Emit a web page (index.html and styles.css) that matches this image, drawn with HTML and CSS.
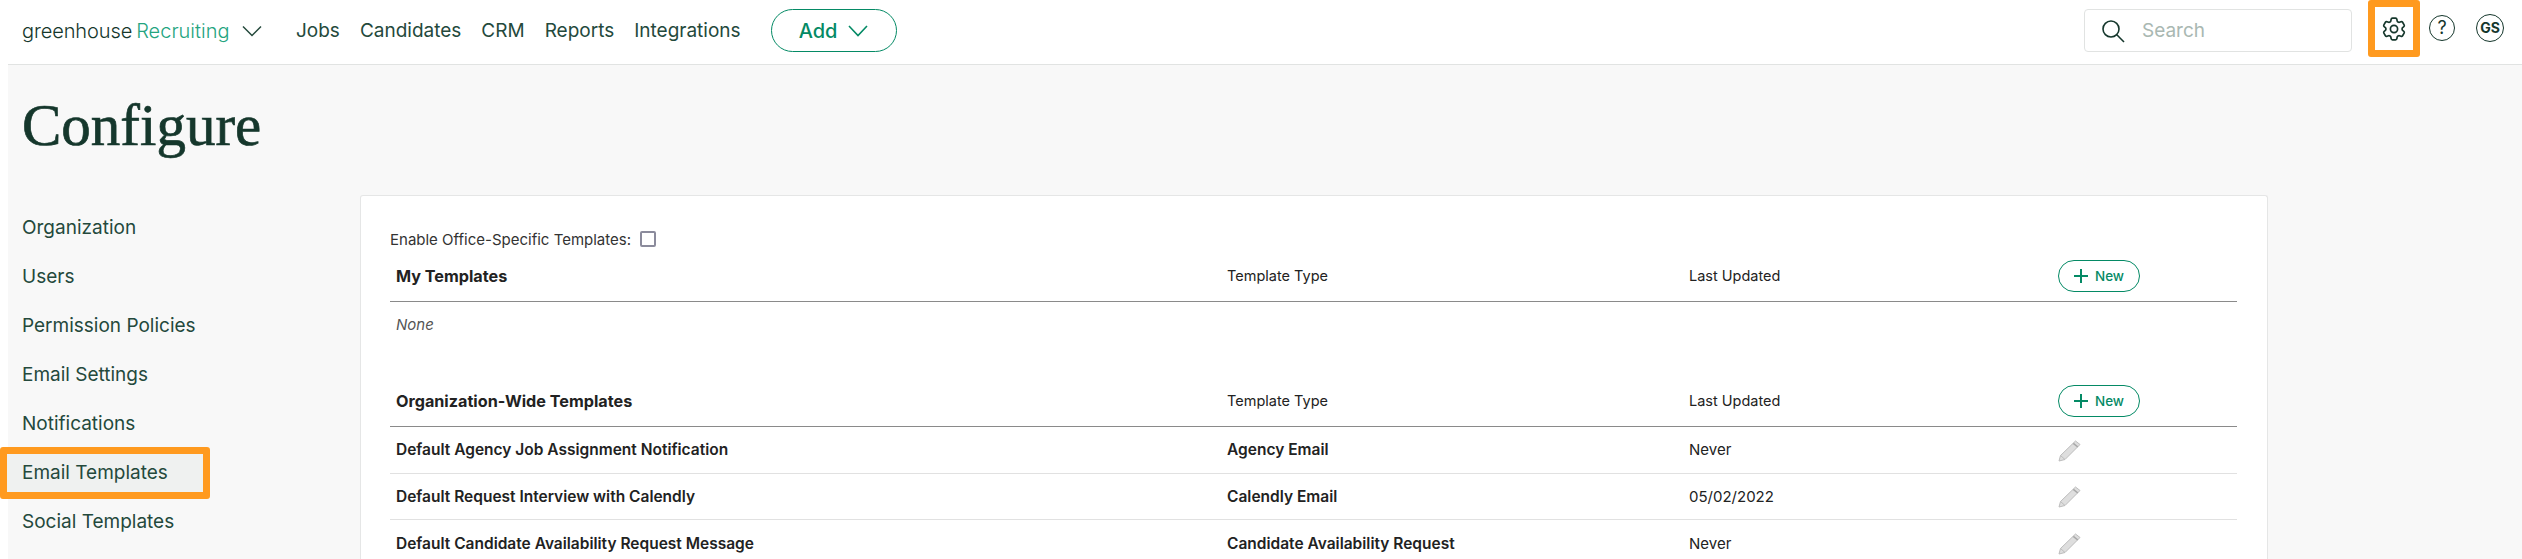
FILE: index.html
```html
<!DOCTYPE html>
<html>

<head>
	<meta charset="utf-8">
	<title>Configure</title>
	<link rel="stylesheet" href="styles.css">
</head>

<body>
	<header class="topbar">
		<div class="logo">
			<span class="logo-green">greenhouse</span>
			<span class="logo-product">Recruiting</span>
			<svg class="logo-chevron" width="20" height="12" viewBox="0 0 20 12"><path d="M1 1.500 10 10.500 19 1.500" fill="none" stroke="#24493c" stroke-width="1.500"/></svg>
		</div>
		<nav class="mainnav">
			<a>Jobs</a>
			<a>Candidates</a>
			<a>CRM</a>
			<a>Reports</a>
			<a>Integrations</a>
		</nav>
		<button class="add-btn">Add
			<svg width="20" height="12" viewBox="0 0 20 12"><path d="M1 1 10 10.500 19 1" fill="none" stroke="#048a65" stroke-width="1.600"/></svg>
		</button>
		<div class="top-right">
			<div class="searchbox">
				<svg width="24" height="24" viewBox="0 0 24 24"><circle cx="10" cy="10" r="8" fill="none" stroke="#15372c" stroke-width="1.600"/><path d="M15.800 15.800 23 23" stroke="#15372c" stroke-width="1.600"/></svg>
				<span>Search</span>
			</div>
			<div class="icon-gear">
				<svg width="24" height="24" viewBox="2 2 20 20" fill="none" stroke="#15372c" stroke-width="1.400" stroke-linejoin="round"><path d="M9.594 3.940c.09-.542.56-.94 1.110-.94h2.593c.55 0 1.020.398 1.110.94l.213 1.281c.063.374.313.686.645.87.074.04.147.083.22.127.324.196.72.257 1.075.124l1.217-.456a1.125 1.125 0 011.370.49l1.296 2.247a1.125 1.125 0 01-.26 1.431l-1.003.827c-.293.24-.438.613-.431.992a6.759 6.759 0 010 .255c-.007.378.138.75.43.99l1.005.828c.424.35.534.954.26 1.430l-1.298 2.247a1.125 1.125 0 01-1.369.491l-1.217-.456c-.355-.133-.75-.072-1.076.124a6.570 6.570 0 01-.22.128c-.331.183-.581.495-.644.869l-.213 1.280c-.09.543-.56.941-1.110.941h-2.594c-.55 0-1.020-.398-1.110-.94l-.213-1.281c-.062-.374-.312-.686-.644-.87a6.520 6.520 0 01-.22-.127c-.325-.196-.72-.257-1.076-.124l-1.217.456a1.125 1.125 0 01-1.369-.49l-1.297-2.247a1.125 1.125 0 01.26-1.431l1.004-.827c.292-.24.437-.613.43-.992a6.932 6.932 0 010-.255c.007-.378-.138-.75-.43-.99l-1.004-.828a1.125 1.125 0 01-.26-1.430l1.297-2.247a1.125 1.125 0 011.370-.491l1.216.456c.356.133.751.072 1.076-.124.072-.044.146-.087.22-.128.332-.183.582-.495.644-.869l.214-1.281z"/><circle cx="12" cy="12" r="3"/></svg>
			</div>
			<div class="icon-help">?</div>
			<div class="icon-user">GS</div>
		</div>
	</header>

	<main class="page">
		<h1 class="page-title">Configure</h1>
		<div class="columns">
			<ul class="sidenav">
				<li>Organization</li>
				<li>Users</li>
				<li>Permission Policies</li>
				<li>Email Settings</li>
				<li>Notifications</li>
				<li class="selected">Email Templates</li>
				<li>Social Templates</li>
			</ul>
			<section class="card">
				<div class="office-toggle">
					<span>Enable Office-Specific Templates:</span>
					<span class="checkbox"></span>
				</div>

				<div class="row head">
					<div class="col-name"><b>My Templates</b></div>
					<div class="col-type">Template Type</div>
					<div class="col-date">Last Updated</div>
					<div class="col-action"><button class="new-btn"><svg width="14" height="14" viewBox="0 0 14 14"><path d="M7 0v14M0 7h14" stroke="#048a65" stroke-width="2"/></svg>New</button></div>
				</div>
				<div class="none-row">None</div>

				<div class="row head">
					<div class="col-name"><b>Organization-Wide Templates</b></div>
					<div class="col-type">Template Type</div>
					<div class="col-date">Last Updated</div>
					<div class="col-action"><button class="new-btn"><svg width="14" height="14" viewBox="0 0 14 14"><path d="M7 0v14M0 7h14" stroke="#048a65" stroke-width="2"/></svg>New</button></div>
				</div>
				<div class="row item">
					<div class="col-name"><b>Default Agency Job Assignment Notification</b></div>
					<div class="col-type"><b>Agency Email</b></div>
					<div class="col-date">Never</div>
					<div class="col-action"><svg class="pencil" width="23" height="22" viewBox="0 0 23 22"><path d="M17.500 1 22 4.500 7 19.500 1 21 2.500 15.500z" fill="#dedede" stroke="#bdbdbd"/><path d="M2.500 15.500 7 19.500" fill="none" stroke="#bdbdbd"/><path d="M15.300 3.300 19.800 7" fill="none" stroke="#a8a8a8" stroke-width="1.500"/></svg></div>
				</div>
				<div class="row item">
					<div class="col-name"><b>Default Request Interview with Calendly</b></div>
					<div class="col-type"><b>Calendly Email</b></div>
					<div class="col-date">05/02/2022</div>
					<div class="col-action"><svg class="pencil" width="23" height="22" viewBox="0 0 23 22"><path d="M17.500 1 22 4.500 7 19.500 1 21 2.500 15.500z" fill="#dedede" stroke="#bdbdbd"/><path d="M2.500 15.500 7 19.500" fill="none" stroke="#bdbdbd"/><path d="M15.300 3.300 19.800 7" fill="none" stroke="#a8a8a8" stroke-width="1.500"/></svg></div>
				</div>
				<div class="row item">
					<div class="col-name"><b>Default Candidate Availability Request Message</b></div>
					<div class="col-type"><b>Candidate Availability Request</b></div>
					<div class="col-date">Never</div>
					<div class="col-action"><svg class="pencil" width="23" height="22" viewBox="0 0 23 22"><path d="M17.500 1 22 4.500 7 19.500 1 21 2.500 15.500z" fill="#dedede" stroke="#bdbdbd"/><path d="M2.500 15.500 7 19.500" fill="none" stroke="#bdbdbd"/><path d="M15.300 3.300 19.800 7" fill="none" stroke="#a8a8a8" stroke-width="1.500"/></svg></div>
				</div>
			</section>
		</div>
	</main>
</body>

</html>
```

FILE: styles.css
```css
html, body {
	margin: 0;
	height: 559px;
	overflow: hidden;
	background-color: #fff;
}

body {
	padding-left: 8px;
	font-family: "Inter", "Liberation Sans", sans-serif;
	color: #222;
}

/* top bar */
.topbar {
	display: flex;
	align-items: center;
	box-sizing: border-box;
	height: 65px;
	padding-bottom: 3px;
	border-bottom: 1px solid #e1e3e2;
	background-color: #fff;
}

.logo {
	display: flex;
	align-items: center;
	margin-left: 14px;
	font-size: 20px;
	font-weight: 300;
	width: 274px;
}

.logo-green {
	color: #15372c;
	letter-spacing: -0.1px;
}

.logo-product {
	margin-left: 4px;
	color: #24a47f;
}

.logo-chevron {
	margin-left: 13px;
}

.mainnav {
	display: flex;
	gap: 20px;
	font-size: 19px;
	color: #24493c;
}

.add-btn {
	display: flex;
	align-items: center;
	justify-content: center;
	gap: 11px;
	margin-left: 30px;
	width: 126px;
	height: 43px;
	border: 1px solid #048a65;
	border-radius: 22px;
	background-color: #fff;
	color: #048a65;
	font: 500 20px "Inter", "Liberation Sans", sans-serif;
}

.top-right {
	display: flex;
	align-items: center;
	margin-left: auto;
	padding-right: 18px;
}

.searchbox {
	display: flex;
	align-items: center;
	gap: 17px;
	box-sizing: border-box;
	width: 268px;
	height: 43px;
	padding-left: 16px;
	border: 1px solid #e1e3e2;
	border-radius: 4px;
	color: #a9b8b2;
	font-size: 19px;
}

.icon-gear {
	display: flex;
	align-items: center;
	justify-content: center;
	box-sizing: border-box;
	width: 52px;
	height: 57px;
	margin-left: 16px;
	margin-top: -4px;
	border: 7px solid #ff9a1f;
	border-radius: 3px;
}

.icon-help {
	box-sizing: border-box;
	width: 26px;
	height: 26px;
	margin-left: 9px;
	margin-top: -5px;
	border: 1.5px solid #15372c;
	border-radius: 50%;
	color: #15372c;
	font-size: 18px;
	line-height: 23px;
	text-align: center;
}

.icon-user {
	box-sizing: border-box;
	width: 28px;
	height: 28px;
	margin-left: 21px;
	margin-top: -5px;
	border: 1px solid #15372c;
	border-radius: 50%;
	color: #15372c;
	font-size: 14px;
	font-weight: 700;
	line-height: 26px;
	text-align: center;
}

/* page */
.page {
	isolation: isolate;
	box-sizing: border-box;
	height: 494px;
	padding: 25px 0 0 14px;
	background-color: #f8f8f8;
}

.page-title {
	margin: 0;
	height: 105px;
	font: 400 59px/70px "Liberation Serif", serif;
	-webkit-text-stroke: 0.7px #15372c;
	color: #15372c;
}

.columns {
	display: flex;
}

.sidenav {
	list-style: none;
	margin: 8px 0 0;
	padding: 0;
	width: 338px;
	flex-shrink: 0;
	font-size: 19px;
	color: #24493c;
}

.sidenav li {
	height: 49px;
	line-height: 49px;
}

.selected {
	position: relative;
}

/* the highlight frame hangs outside the list item */
.selected::before {
	content: "";
	position: absolute;
	z-index: -1;
	left: -22px;
	top: -1px;
	width: 210px;
	height: 52px;
	box-sizing: border-box;
	border: 7px solid #ff9a1f;
	border-radius: 3px;
	background-color: #eff1f0;
}

/* runs on past the bottom of the window, so no bottom border */
.card {
	width: 1908px;
	box-sizing: border-box;
	height: 364px;
	overflow: hidden;
	padding: 33px 30px 0 29px;
	border: 1px solid #e5e6e6;
	border-bottom: 0;
	border-radius: 3px 3px 0 0;
	background-color: #fff;
	font-size: 15px;
}

.office-toggle {
	display: flex;
	align-items: center;
	gap: 9px;
	height: 20px;
	color: #333;
}

.checkbox {
	box-sizing: border-box;
	width: 16px;
	height: 16px;
	border: 2px solid #8b8b9c;
	border-radius: 2px;
}

.row {
	display: flex;
	align-items: center;
	box-sizing: border-box;
	border-bottom: 1px solid #e1e1e1;
}

.row.head {
	height: 52px;
	border-bottom-color: #8a8a8a;
	font-size: 14.500px;
}

.office-toggle + .row {
	margin-top: 1px;
}

.row.item {
	height: 46.670px;
}

.item b {
	font-size: 15.500px;
	font-weight: 600;
}

.col-name {
	width: 837px;
	padding-left: 6px;
	box-sizing: border-box;
}

.head .col-name {
	font-size: 16.200px;
}

.col-type {
	width: 462px;
}

.col-date {
	width: 369px;
}

.none-row {
	height: 73px;
	padding: 13px 6px 0;
	box-sizing: border-box;
	font-style: italic;
	color: #555;
}

.new-btn {
	display: flex;
	align-items: center;
	justify-content: center;
	gap: 7px;
	width: 82px;
	height: 32px;
	border: 1px solid #048a65;
	border-radius: 16px;
	background-color: #fff;
	color: #048a65;
	font: 500 13.500px "Inter", "Liberation Sans", sans-serif;
}

.pencil {
	display: block;
	margin-top: 2px;
}
```
